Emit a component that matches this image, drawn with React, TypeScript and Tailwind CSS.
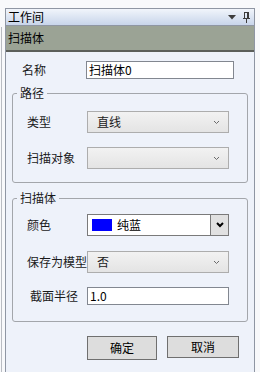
import React from "react"

const font = { fontFamily: '"Noto Sans CJK SC", "Noto Sans", sans-serif' }

function Chevron() {
  return (
    <svg width="7" height="5" viewBox="0 0 7 5" className="mr-[8px]">
      <polyline points="1,1 3.5,3.5 6,1" fill="none" stroke="#6b6b6b" strokeWidth="1" />
    </svg>
  )
}

function Select({ value }: { value?: string }) {
  return (
    <div className="flex h-[22px] w-[142px] items-center justify-between border border-[#adadad] bg-gradient-to-b from-[#f2f2f2] to-[#e4e4e4] pl-[9px]">
      <span className="text-[12px] leading-[16px] text-[#1a1a1a]">{value}</span>
      <Chevron />
    </div>
  )
}

function Row({ label, children, className = "", labelClass = "" }: { label: string; children: React.ReactNode; className?: string; labelClass?: string }) {
  return (
    <div className={`flex items-center ${className}`}>
      <div className={`w-[60px] whitespace-nowrap text-[12px] leading-[16px] text-[#1a1a1a] ${labelClass}`}>{label}</div>
      {children}
    </div>
  )
}

function Group({ title, children, className = "" }: { title: string; children: React.ReactNode; className?: string }) {
  return (
    <div className={`mx-[6px] rounded-[3px] border border-[#a3a6ab] pl-[14px] ${className}`}>
      <div className="-mt-[9px] ml-[4px] w-fit -translate-x-[14px] bg-[#eef2fa] px-[3px] text-[12px] leading-[16px] text-[#1a1a1a]">
        {title}
      </div>
      {children}
    </div>
  )
}

export default function App() {
  return (
    <div className="flex h-[372px] w-[260px] overflow-hidden bg-[#f8f9fb]" style={font}>
      <div className="w-[5px]">
        <div className="ml-[1px] mt-[27px] h-full border-l border-[#b9bcc2]" />
      </div>
      <div className="mt-[8px] flex w-[250px] flex-col border border-b-0 border-[#8f96a3] bg-[#eef2fa]">
        <div className="flex h-[17px] items-center justify-between border-b border-[#8f96a3] bg-gradient-to-b from-[#f1f5fb] to-[#c8d5ea] pl-[2px] pr-[4px]">
          <span className="text-[12px] leading-[16px] text-black">工作间</span>
          <div className="flex items-center gap-[7px]">
            <svg width="8" height="5" viewBox="0 0 8 5">
              <polygon points="0,0 8,0 4,4.5" fill="#3c3c3c" />
            </svg>
            <svg width="7" height="11" viewBox="0 0 7 11">
              <rect x="1.5" y="0.5" width="4" height="6" fill="none" stroke="#3c3c3c" />
              <rect x="4" y="1" width="1" height="5" fill="#3c3c3c" />
              <line x1="0" y1="6.5" x2="7" y2="6.5" stroke="#3c3c3c" />
              <line x1="3.5" y1="7" x2="3.5" y2="11" stroke="#3c3c3c" />
            </svg>
          </div>
        </div>
        <div className="flex h-[26px] items-center border-b-2 border-[#5c5f5a] bg-[#9ba395] pl-[2px]">
          <span className="text-[12px] leading-[16px] text-black">扫描体</span>
        </div>

        <div className="mt-[9px] flex items-center pl-[16px]">
          <div className="w-[64px] text-[12px] leading-[16px] text-[#1a1a1a]">名称</div>
          <div className="flex h-[18px] w-[148px] items-center border border-[#828790] bg-white pl-[2px] text-[12px] leading-[16px] text-black">
            扫描体0
          </div>
        </div>

        <Group title="路径" className="mt-[14px] h-[90px]">
          <Row label="类型" className="mt-[10px]">
            <Select value="直线" />
          </Row>
          <Row label="扫描对象" className="mt-[14px]">
            <Select />
          </Row>
        </Group>

        <Group title="扫描体" className="mt-[15px] h-[124px]">
          <Row label="颜色" className="mt-[8px]">
            <div className="flex h-[22px] w-[142px] items-center border border-[#7a7a7a] bg-white">
              <div className="ml-[4px] h-[12px] w-[20px] bg-[#0000ff]" />
              <span className="ml-[5px] flex-1 text-[12px] leading-[16px] text-black">纯蓝</span>
              <div className="flex h-full w-[18px] items-center justify-center border-l border-[#7a7a7a] bg-[#e1e1e1]">
                <svg width="8" height="6" viewBox="0 0 8 6">
                  <polyline points="1,1 4,4 7,1" fill="none" stroke="#000" strokeWidth="2" />
                </svg>
              </div>
            </div>
          </Row>
          <Row label="保存为模型" className="mt-[15px]">
            <Select value="否" />
          </Row>
          <Row label="截面半径" className="mt-[14px]" labelClass="pl-[3px]">
            <div className="flex h-[18px] w-[142px] items-center border border-[#828790] bg-white pl-[2px] text-[12px] leading-[16px] text-black">
              1.0
            </div>
          </Row>
        </Group>

        <div className="mt-[14px] flex gap-[10px] pl-[81px]">
          <button className="h-[24px] w-[70px] border border-[#6f6f6f] bg-[#dddddd] text-[12px] leading-[16px] text-black">
            确定
          </button>
          <button className="h-[22px] w-[72px] border border-[#6f6f6f] bg-[#dddddd] text-[12px] leading-[16px] text-black">
            取消
          </button>
        </div>
      </div>
    </div>
  )
}
